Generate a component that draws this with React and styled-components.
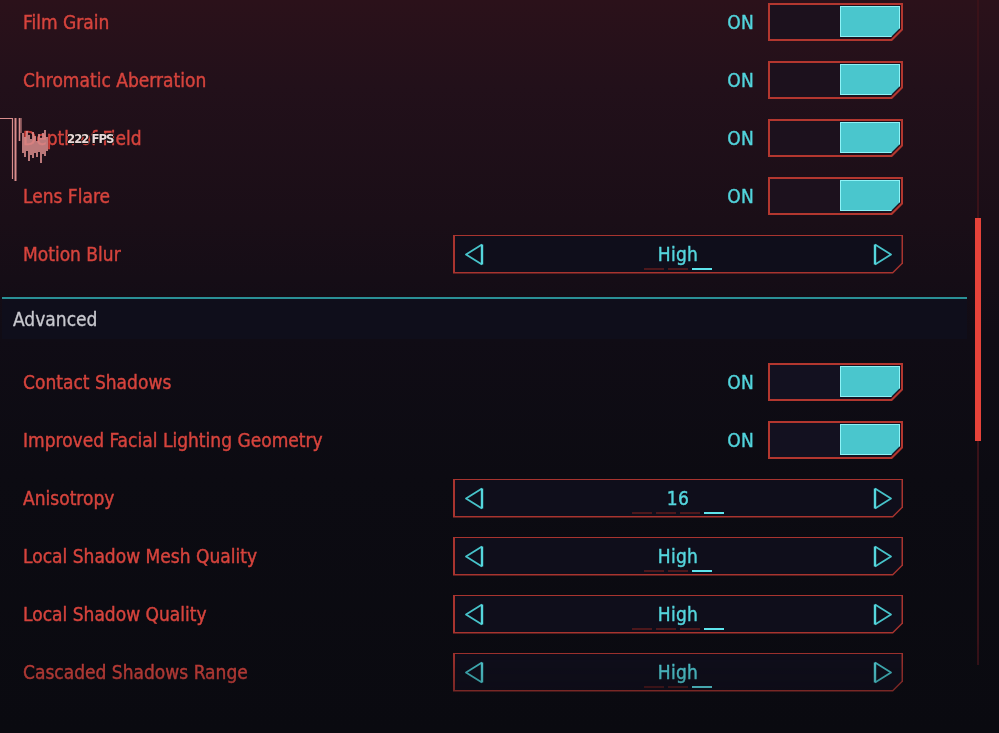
import React from 'react';
import styled, { createGlobalStyle } from 'styled-components';

const GlobalStyle = createGlobalStyle`
  html, body {
    margin: 0;
    padding: 0;
    height: 100%;
    overflow: hidden;
  }
  body {
    background: linear-gradient(
      180deg,
      #2b111a 0%,
      #22101a 12%,
      #1a0e17 30%,
      #100c15 46%,
      #0c0b12 65%,
      #0a0a10 100%
    );
    font-family: 'DejaVu Sans Condensed', 'DejaVu Sans', sans-serif;
    font-stretch: condensed;
  }
`;

const topRows = [
  { label: 'Film Grain', type: 'toggle' },
  { label: 'Chromatic Aberration', type: 'toggle' },
  { label: 'Depth of Field', type: 'toggle' },
  { label: 'Lens Flare', type: 'toggle' },
  { label: 'Motion Blur', type: 'select', value: 'High', steps: 3 },
];

const advancedRows = [
  { label: 'Contact Shadows', type: 'toggle' },
  { label: 'Improved Facial Lighting Geometry', type: 'toggle' },
  { label: 'Anisotropy', type: 'select', value: '16', steps: 4 },
  { label: 'Local Shadow Mesh Quality', type: 'select', value: 'High', steps: 3 },
  { label: 'Local Shadow Quality', type: 'select', value: 'High', steps: 4 },
  { label: 'Cascaded Shadows Range', type: 'select', value: 'High', steps: 3 },
];

// x, top, bottom of each stroke in the fps graph
const fpsBars = [
  [23, 16, 36], [25, 20, 40], [27, 14, 34], [29, 18, 44], [31, 22, 38],
  [33, 15, 41], [35, 19, 36], [37, 24, 40], [39, 17, 35], [41, 21, 46],
  [43, 16, 37], [45, 13, 39], [47, 20, 34],
];

const Arrow = ({ dir }) => (
  <svg width="20" height="23" viewBox="0 0 20 23">
    {dir === 'left' ? (
      <>
        <path d="M18 1.5 L2 11.5 L18 21.5" fill="none" stroke="#47c3ca" strokeWidth="1.8" strokeLinejoin="round" />
        <line x1="18" y1="1.5" x2="18" y2="21.5" stroke="#55d6dd" strokeWidth="2.4" />
      </>
    ) : (
      <>
        <path d="M2 1.5 L18 11.5 L2 21.5" fill="none" stroke="#47c3ca" strokeWidth="1.8" strokeLinejoin="round" />
        <line x1="2" y1="1.5" x2="2" y2="21.5" stroke="#55d6dd" strokeWidth="2.4" />
      </>
    )}
  </svg>
);

const Toggle = ({ dark }) => (
  <ToggleWrap>
    <OnText>ON</OnText>
    <ToggleFrame>
      <ToggleInner $dark={dark}>
        <ToggleFill />
      </ToggleInner>
    </ToggleFrame>
  </ToggleWrap>
);

const Selector = ({ value, steps }) => (
  <SelectFrame>
    <SelectInner>
      <Arrow dir="left" />
      <ValueBox>
        <Value>{value}</Value>
        <Dashes>
          {Array.from({ length: steps }).map((_, i) => (
            <Dash key={i} $active={i === steps - 1} />
          ))}
        </Dashes>
      </ValueBox>
      <Arrow dir="right" />
    </SelectInner>
  </SelectFrame>
);

const SettingRow = ({ row, dark }) => (
  <Row>
    <Label>{row.label}</Label>
    {row.type === 'toggle' ? <Toggle dark={dark} /> : <Selector value={row.value} steps={row.steps} />}
  </Row>
);

const App = () => (
  <Page>
    <GlobalStyle />
    <Content>
      <List>
        {topRows.map((r) => (
          <SettingRow key={r.label} row={r} />
        ))}
      </List>
      <SectionHeader>Advanced</SectionHeader>
      <List>
        {advancedRows.map((r) => (
          <SettingRow key={r.label} row={r} dark />
        ))}
      </List>
    </Content>
    <ScrollTrack>
      <ScrollThumb />
    </ScrollTrack>
    <FpsOverlay>
      <svg width="52" height="64" viewBox="0 0 52 64">
        <g stroke="#d98c8c" fill="none">
          <path d="M0 1.5 H12.5 V62" strokeWidth="1.2" />
          <path d="M15.5 1 V64" strokeWidth="2" />
          <path d="M19.5 1 V24" strokeWidth="1.6" />
          <path d="M21 1 V16" strokeWidth="1" />
        </g>
        <g stroke="#d98c8c" strokeWidth="2" opacity="0.85">
          {fpsBars.map(([x, t, b]) => (
            <line key={x} x1={x} y1={t} x2={x} y2={b} />
          ))}
        </g>
      </svg>
      <FpsText>222 FPS</FpsText>
    </FpsOverlay>
  </Page>
);

export default App;

const Page = styled.div`
  position: relative;
  display: flex;
  height: 733px;
  overflow: hidden;
  -webkit-mask-image: linear-gradient(to bottom, #000 640px, rgba(0, 0, 0, 0.45) 733px);
  mask-image: linear-gradient(to bottom, #000 640px, rgba(0, 0, 0, 0.45) 733px);
`;

const Content = styled.div`
  width: 965px;
  margin-left: 2px;
  margin-top: -7px;
  display: flex;
  flex-direction: column;
`;

const List = styled.div`
  display: flex;
  flex-direction: column;
`;

const Row = styled.div`
  height: 58px;
  display: flex;
  align-items: center;
  justify-content: space-between;
  padding: 0 64px 0 21px;
`;

const Label = styled.span`
  color: #d6443d;
  font-size: 19px;
  letter-spacing: 0;
  -webkit-text-stroke: 0.4px currentColor;
`;

const ToggleWrap = styled.div`
  display: flex;
  align-items: center;
  gap: 14px;
`;

const OnText = styled.span`
  color: #52d4dc;
  font-size: 19px;
  letter-spacing: 0.3px;
  -webkit-text-stroke: 0.4px currentColor;
`;

const ToggleFrame = styled.div`
  flex-shrink: 0;
  width: 135px;
  height: 38px;
  padding: 2px;
  box-sizing: border-box;
  background: #b3372f;
  clip-path: polygon(0 0, 100% 0, 100% calc(100% - 11px), calc(100% - 11px) 100%, 0 100%);
`;

const ToggleInner = styled.div`
  height: 100%;
  box-sizing: border-box;
  padding: 1px 1px 2px;
  display: flex;
  justify-content: flex-end;
  background: ${(p) => (p.$dark ? '#131120' : '#1c111d')};
  clip-path: polygon(0 0, 100% 0, 100% calc(100% - 10px), calc(100% - 10px) 100%, 0 100%);
`;

const ToggleFill = styled.div`
  width: 60px;
  height: 100%;
  background: #4ac6cd;
  box-shadow: inset 0 0 0 1px #8ef2f6;
  clip-path: polygon(0 0, 100% 0, 100% calc(100% - 9px), calc(100% - 9px) 100%, 0 100%);
`;

const SelectFrame = styled.div`
  flex-shrink: 0;
  width: 450px;
  height: 39px;
  padding: 1.5px;
  box-sizing: border-box;
  background: #a8342f;
  clip-path: polygon(0 0, 100% 0, 100% calc(100% - 10px), calc(100% - 10px) 100%, 0 100%);
`;

const SelectInner = styled.div`
  height: 100%;
  box-sizing: border-box;
  padding: 0 9px 0 9px;
  display: flex;
  align-items: center;
  justify-content: space-between;
  background: #0f0e1b;
  clip-path: polygon(0 0, 100% 0, 100% calc(100% - 9px), calc(100% - 9px) 100%, 0 100%);
`;

const ValueBox = styled.div`
  display: flex;
  flex-direction: column;
  align-items: center;
  gap: 4px;
  padding-top: 5px;
`;

const Value = styled.span`
  color: #55d6de;
  font-size: 19px;
  line-height: 20px;
  letter-spacing: 0.3px;
  -webkit-text-stroke: 0.4px currentColor;
`;

const Dashes = styled.div`
  display: flex;
  gap: 4px;
`;

const Dash = styled.div`
  width: 20px;
  height: 2px;
  background: ${(p) => (p.$active ? '#5ee4ec' : '#4d181c')};
`;

const SectionHeader = styled.div`
  margin: 14px 0;
  height: 40px;
  border-top: 2px solid #2a9096;
  background: #0f0e1b;
  color: #c8c8ce;
  font-size: 19px;
  display: flex;
  align-items: center;
  padding-left: 11px;
  -webkit-text-stroke: 0.3px currentColor;
`;

const ScrollTrack = styled.div`
  margin-left: 8px;
  width: 6px;
  height: 665px;
  position: relative;
  background: linear-gradient(90deg, transparent 2px, #3a1219 2px, #3a1219 4px, transparent 4px);
`;

const ScrollThumb = styled.div`
  position: absolute;
  top: 218px;
  left: 0;
  width: 6px;
  height: 223px;
  background: #e6433a;
`;

const FpsOverlay = styled.div`
  position: absolute;
  left: 0;
  top: 117px;
  display: flex;
  align-items: flex-start;
  gap: 15px;
`;

const FpsText = styled.span`
  margin-top: 14px;
  color: #ead8d8;
  font-family: 'DejaVu Sans Condensed', 'DejaVu Sans', sans-serif;
  font-weight: bold;
  font-size: 13px;
  letter-spacing: -1px;
  text-shadow: -1px 0 #111, 1px 0 #111, 0 -1px #111, 0 1px #111;
`;
